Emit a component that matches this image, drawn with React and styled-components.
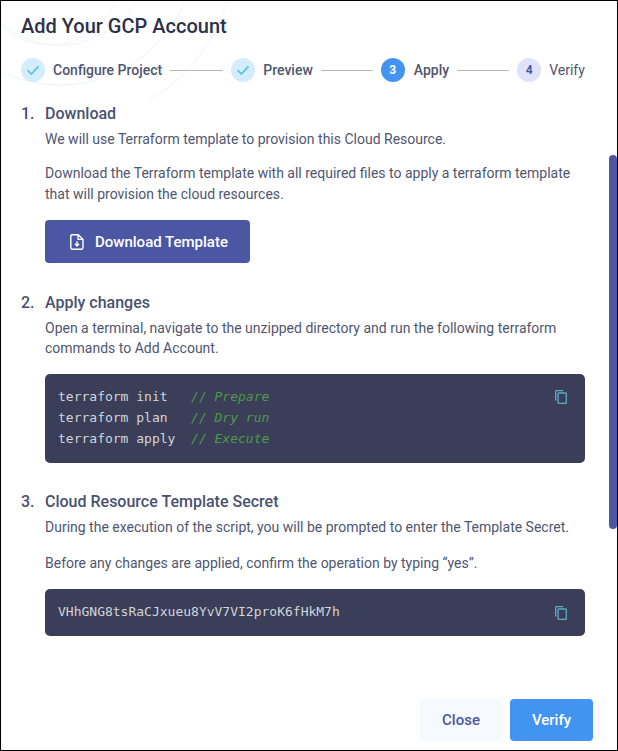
import React from 'react';
import styled, { createGlobalStyle } from 'styled-components';

const Global = createGlobalStyle`
  html, body { margin: 0; padding: 0; background: #fff; }
  * { box-sizing: border-box; }
`;

const Modal = styled.div`
  position: relative;
  width: 618px;
  height: 751px;
  border: 1px solid #000;
  background: #fff;
  overflow: hidden;
  display: flex;
  flex-direction: column;
  font-family: Roboto, "Liberation Sans", sans-serif;
  color: #4a5170;
`;

const Rings = styled.svg`
  position: absolute;
  left: -1px;
  top: -1px;
  pointer-events: none;
`;

const Header = styled.header`
  position: relative;
  padding: 12px 32px 0 20px;
  display: flex;
  flex-direction: column;
  gap: 18px;
`;

const Title = styled.h1`
  margin: 0;
  font-size: 20px;
  line-height: 27px;
  font-weight: 500;
  color: #2d3148;
`;

const Stepper = styled.div`
  display: flex;
  align-items: center;
  height: 24px;
`;

const Step = styled.div`
  display: flex;
  align-items: center;
  gap: ${p => p.$gap ?? 8}px;
  flex: none;
`;

const Circle = styled.span`
  width: 24px;
  height: 24px;
  border-radius: 50%;
  display: flex;
  align-items: center;
  justify-content: center;
  font-size: 12px;
  font-weight: 700;
  background: ${p => (p.$state === 'done' ? '#d4ecfc' : p.$state === 'active' ? '#4394f1' : '#dfe3fa')};
  color: ${p => (p.$state === 'active' ? '#fff' : '#4b57a3')};
`;

const StepLabel = styled.span`
  font-size: 14px;
  line-height: 20px;
  font-weight: ${p => (p.$muted ? 400 : 500)};
  color: #4f566f;
  white-space: nowrap;
`;

const Line = styled.span`
  flex: none;
  width: ${p => p.$w}px;
  height: 1px;
  margin: 1px 8px 0;
  background: #b7b7bb;
`;

const Body = styled.main`
  padding: 21px 32px 0 20px;
  display: flex;
  flex-direction: column;
  gap: 28px;
`;

const Section = styled.section`
  display: grid;
  grid-template-columns: 24px 1fr;
`;

const Num = styled.span`
  font-size: 16px;
  line-height: 22px;
  font-weight: 500;
  color: #4a5170;
`;

const SectionTitle = styled.h2`
  margin: 0;
  font-size: 16px;
  line-height: 22px;
  font-weight: 500;
  color: #4a5170;
`;

const Content = styled.div`
  display: flex;
  flex-direction: column;
`;

const Text = styled.p`
  margin: ${p => p.$top ?? 4}px 0 0;
  font-size: 14px;
  line-height: ${p => p.$lh ?? 21}px;
  color: #4f566f;
`;

const DownloadButton = styled.button`
  margin-top: 15px;
  margin-bottom: 1px;
  width: 205px;
  height: 43px;
  padding: 0 0 0 3px;
  border: 0;
  border-radius: 4px;
  background: #4b57a3;
  color: #fff;
  font: 500 15px Roboto, sans-serif;
  display: flex;
  align-items: center;
  justify-content: center;
  gap: 11px;
`;

const CodeBox = styled.div`
  position: relative;
  margin-top: ${p => p.$top}px;
  border-radius: 5px;
  background: #3a3e58;
  padding: 12px 13px 14px;
  font-family: "DejaVu Sans Mono", monospace;
  font-size: 13px;
  line-height: 21px;
  color: #d4d5da;
  white-space: pre;
`;

const Comment = styled.span`
  color: #4f9a48;
  font-style: italic;
`;

const CopyButton = styled.span`
  position: absolute;
  right: 18px;
  top: ${p => p.$top}px;
  display: flex;
  color: #5aaec6;
`;

const Footer = styled.footer`
  margin-top: auto;
  padding: 0 24px 9px 0;
  display: flex;
  justify-content: flex-end;
  gap: 8px;
`;

const FooterButton = styled.button`
  width: ${p => p.$w}px;
  height: 42px;
  border: 0;
  border-radius: 4px;
  font: 500 15px Roboto, sans-serif;
  background: ${p => (p.$primary ? '#4394f1' : '#f6f9fd')};
  color: ${p => (p.$primary ? '#fff' : '#4b57a3')};
`;

const ScrollThumb = styled.div`
  position: absolute;
  right: 0;
  top: 154px;
  width: 8px;
  height: 374px;
  background: #4b57a3;
  border-radius: 4px;
`;

const Check = () => (
  <svg width="14" height="14" viewBox="0 0 14 14" fill="none" stroke="#55c6e0" strokeWidth="1.7">
    <path d="M1.5 7.2 5.4 11 12.5 3.4" />
  </svg>
);

const CopyIcon = () => (
  <svg width="12" height="14" viewBox="0 0 12 14" fill="none" stroke="currentColor" strokeWidth="1.3">
    <path d="M.7 10.5V1.6q0-.9.9-.9h6.6" />
    <rect x="3" y="3" width="8.3" height="10.3" rx=".9" />
  </svg>
);

const FileIcon = () => (
  <svg width="14" height="16" viewBox="0 0 14 16" fill="none" stroke="#fff" strokeWidth="1.4" strokeLinejoin="round">
    <path d="M1.9.8h6.4L13 5.4v8.2q0 1.6-1.5 1.6H2.2Q.8 15.2.8 13.6V2Q.8.8 1.9.8Z" />
    <path d="M8 1v4.4h4.8" />
    <path d="M7 7.2v4.6M4.9 9.8 7 11.9l2.1-2.1" />
  </svg>
);

export default function App() {
  return (
    <>
      <Global />
      <Modal>
        <Rings width="240" height="100" viewBox="0 0 240 100" fill="none" stroke="#eef5fb">
          <circle cx="50" cy="-25" r="70" />
          <circle cx="60" cy="-45" r="90" />
          <circle cx="60" cy="-50" r="135" />
          <circle cx="60" cy="-50" r="175" />
        </Rings>
        <Header>
          <Title>Add Your GCP Account</Title>
          <Stepper>
            <Step><Circle $state="done"><Check /></Circle><StepLabel>Configure Project</StepLabel></Step>
            <Line $w={53} />
            <Step><Circle $state="done"><Check /></Circle><StepLabel>Preview</StepLabel></Step>
            <Line $w={52} />
            <Step $gap={9}><Circle $state="active">3</Circle><StepLabel>Apply</StepLabel></Step>
            <Line $w={52} />
            <Step><Circle $state="todo">4</Circle><StepLabel $muted>Verify</StepLabel></Step>
          </Stepper>
        </Header>
        <Body>
          <Section>
            <Num>1.</Num>
            <Content>
              <SectionTitle>Download</SectionTitle>
              <Text>We will use Terraform template to provision this Cloud Resource.</Text>
              <Text $top={13}>Download the Terraform template with all required files to apply a terraform template that will provision the cloud resources.</Text>
              <DownloadButton><FileIcon />Download Template</DownloadButton>
            </Content>
          </Section>
          <Section>
            <Num>2.</Num>
            <Content>
              <SectionTitle>Apply changes</SectionTitle>
              <Text $top={4} $lh={20}>Open a terminal, navigate to the unzipped directory and run the following terraform commands to Add Account.</Text>
              <CodeBox $top={16}>
                {'terraform init   '}<Comment>// Prepare</Comment>{'\n'}
                {'terraform plan   '}<Comment>// Dry run</Comment>{'\n'}
                {'terraform apply  '}<Comment>// Execute</Comment>
                <CopyButton $top={16}><CopyIcon /></CopyButton>
              </CodeBox>
            </Content>
          </Section>
          <Section>
            <Num>3.</Num>
            <Content>
              <SectionTitle>Cloud Resource Template Secret</SectionTitle>
              <Text>During the execution of the script, you will be prompted to enter the Template Secret.</Text>
              <Text $top={15}>Before any changes are applied, confirm the operation by typing “yes”.</Text>
              <CodeBox $top={15}>
                VHhGNG8tsRaCJxueu8YvV7VI2proK6fHkM7h
                <CopyButton $top={17}><CopyIcon /></CopyButton>
              </CodeBox>
            </Content>
          </Section>
        </Body>
        <Footer>
          <FooterButton $w={82}>Close</FooterButton>
          <FooterButton $w={83} $primary>Verify</FooterButton>
        </Footer>
        <ScrollThumb />
      </Modal>
    </>
  );
}
